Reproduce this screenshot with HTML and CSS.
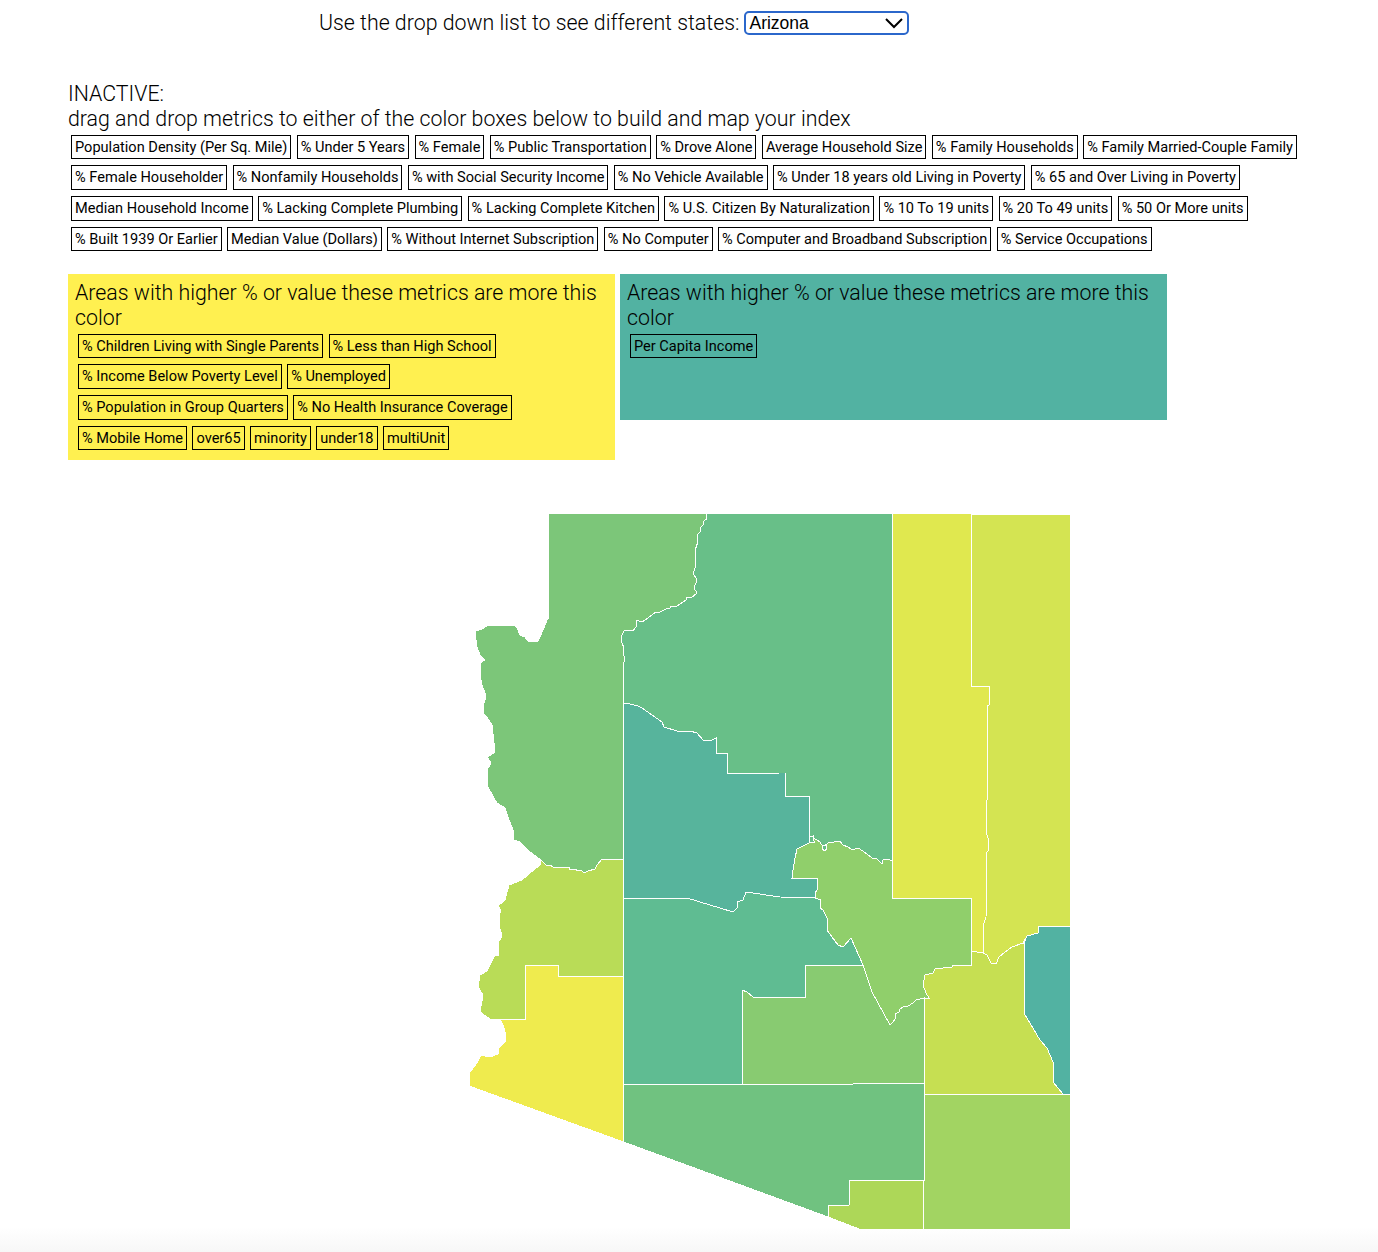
FILE: index.html
```html
<!DOCTYPE html>
<html>
<head>
    <meta charset="UTF-8">
    <title>Index Map</title>
    <link rel="stylesheet" href="styles.css">
</head>
<body>
    <div class="picker">
        <label for="state">Use the drop down list to see different states:</label>
        <div class="select-wrap">
            <select id="state" name="state">
                <option>Arizona</option>
                <option>Alabama</option>
                <option>Alaska</option>
            </select>
            <svg class="chevron" width="20" height="12" viewBox="0 0 20 12"><path d="M2 2 L10 10 L18 2" fill="none" stroke="#000" stroke-width="2"/></svg>
        </div>
    </div>

    <div class="inactive">
        <div class="title">INACTIVE:<br>drag and drop metrics to either of the color boxes below to build and map your index</div>
        <div class="tags">
            <span class="tag" draggable="true">Population Density (Per Sq. Mile)</span>
            <span class="tag" draggable="true">% Under 5 Years</span>
            <span class="tag" draggable="true">% Female</span>
            <span class="tag" draggable="true">% Public Transportation</span>
            <span class="tag" draggable="true">% Drove Alone</span>
            <span class="tag" draggable="true">Average Household Size</span>
            <span class="tag" draggable="true">% Family Households</span>
            <span class="tag" draggable="true">% Family Married-Couple Family</span>
            <span class="tag" draggable="true">% Female Householder</span>
            <span class="tag" draggable="true">% Nonfamily Households</span>
            <span class="tag" draggable="true">% with Social Security Income</span>
            <span class="tag" draggable="true">% No Vehicle Available</span>
            <span class="tag" draggable="true">% Under 18 years old Living in Poverty</span>
            <span class="tag" draggable="true">% 65 and Over Living in Poverty</span>
            <span class="tag" draggable="true">Median Household Income</span>
            <span class="tag" draggable="true">% Lacking Complete Plumbing</span>
            <span class="tag" draggable="true">% Lacking Complete Kitchen</span>
            <span class="tag" draggable="true">% U.S. Citizen By Naturalization</span>
            <span class="tag" draggable="true">% 10 To 19 units</span>
            <span class="tag" draggable="true">% 20 To 49 units</span>
            <span class="tag" draggable="true">% 50 Or More units</span>
            <span class="tag" draggable="true">% Built 1939 Or Earlier</span>
            <span class="tag" draggable="true">Median Value (Dollars)</span>
            <span class="tag" draggable="true">% Without Internet Subscription</span>
            <span class="tag" draggable="true">% No Computer</span>
            <span class="tag" draggable="true">% Computer and Broadband Subscription</span>
            <span class="tag" draggable="true">% Service Occupations</span>
        </div>
    </div>

    <div class="boxes">
        <div class="box box-yellow">
            <div class="title">Areas with higher % or value these metrics are more this color</div>
            <div class="tags">
                <span class="tag" draggable="true">% Children Living with Single Parents</span>
                <span class="tag" draggable="true">% Less than High School</span>
                <span class="tag" draggable="true">% Income Below Poverty Level</span>
                <span class="tag" draggable="true">% Unemployed</span>
                <span class="tag" draggable="true">% Population in Group Quarters</span>
                <span class="tag" draggable="true">% No Health Insurance Coverage</span>
                <span class="tag" draggable="true">% Mobile Home</span>
                <span class="tag" draggable="true">over65</span>
                <span class="tag" draggable="true">minority</span>
                <span class="tag" draggable="true">under18</span>
                <span class="tag" draggable="true">multiUnit</span>
            </div>
        </div>
        <div class="box box-teal">
            <div class="title">Areas with higher % or value these metrics are more this color</div>
            <div class="tags">
                <span class="tag" draggable="true">Per Capita Income</span>
            </div>
        </div>
    </div>

    <svg class="map" width="620" height="725" viewBox="460 505 620 725">
        <polygon class="county" fill="#7cc679" points="548.5,513.5 706,513.5 706.5,519 704,521 703,525 701,527 700,532 698,534 697.5,543 695.5,549 695.5,556 696,566 693,573 697,580 694,588 697,593 691,598 687,597.5 686,600 683,602 677,606 671,606 670,608 666,609 660,612 655,612.5 648,618 642,622 638,620.5 636,621 636,627 633,631 627,630 624,631 621,637 622,643 624,648 623.5,655 625,658 623.5,664 623.5,859 620,860 602,859 597,865 595,869 588,871 584,873 581,870 578,871 575,869 570,870 569,867 553,867 550,865 547,866 541,860 537,857 530,852 523,845 520,842 514,840 513,830 508,817 505,808 497,803 495,800 488,787 487,770 491,763 487,757 494,753 494,743 492,725 489,720 484,714 483,707 485,700 485,693 482,685 481,680 480,663 485,660 480,655 477,647 476,640 475,631 482,629 487,626 500,625 507,626 515,625 518,630 520,635 525,637 528,641 535,641 538,641 540,637 543,630 547,620 549,618"/>
        <polygon class="county" fill="#68bf88" points="706,513.5 892.5,513.5 892.5,865 892,861 888,859 883,860 882,864 877,859 872,858 863,851 858,848 852,850 848,847 843,845 840,841 828,843 823,847 820,842 812,837 809,843 809,796 785,796 785,773 780,773 727,774 727,753 716,753 716,738 710,741 703,740 697,733 690,731 677,731 664,727 662,722 642,708 638,706 630,704 623.5,703 623.5,664 625,658 623.5,655 624,648 622,643 621,637 624,631 627,630 633,631 636,627 636,621 638,620.5 642,622 648,618 655,612.5 660,612 666,609 670,608 671,606 677,606 683,602 686,600 687,597.5 691,598 697,593 694,588 697,580 693,573 696,566 695.5,556 695.5,549 697.5,543 698,534 700,532 701,527 703,525 704,521 706.5,519"/>
        <polygon class="county" fill="#57b49c" points="623.5,703 630,704 638,706 642,708 662,722 664,727 677,731 690,731 697,733 703,740 710,741 716,738 716,753 727,753 727,774 780,773 785,773 785,796 809,796 809,843 797,849 795,858 793,870 792,878 817,878 818,889 815,893 815,898 780,897 746,892 743,900 737,902 737,908 733,912 687,898 623.5,898"/>
        <polygon class="county" fill="#e0e84f" points="892.5,513.5 971,514 971,686 989.5,686 989,705 987,706 987,800 986,815 986,832 988,838 988,851 987,852 986,917 983,926 983,953 971,951 971,898 892.5,898"/>
        <polygon class="county" fill="#d4e452" points="971,514 1070,514 1070,926 1039,926 1038,933 1027,936 1023,943 1012,947 1005,952 999,957 996,964 991,963 987,955 983,953 983,926 986,917 987,852 988,851 988,838 986,832 986,815 987,800 987,706 989,705 989.5,686 971,686"/>
        <polygon class="county" fill="#90cf6b" points="797,849 809,843 812,837 820,842 823,847 828,843 840,841 843,845 848,847 852,850 858,848 863,851 872,858 877,859 882,864 883,860 888,859 892,861 892.5,865 892.5,898 971,898 971,965 953,965 952,967 935,969 933,973 925,975 923,985 926,993 929,998 924,998 916,1000 913,1003 908,1006 905,1006 900,1009 899,1012 895,1014 895,1019 893,1022 890,1025 872,992 863,965 851,938 843,947 838,945 832,937 827,930 827,918 823,910 820,908 821,900 815,898 815,893 818,889 817,878 792,878 793,870 795,858"/>
        <polygon class="lake" points="810,837 813,836 813,840 815,842 812,843 809,842"/>
        <polygon class="lake" points="822,845 826,845 827,849 824,851 822,848"/>
        <polygon class="county" fill="#52b2a2" points="1039,926 1070,926 1070,1094 1063,1094 1053,1082 1053,1062 1047,1048 1040,1040 1024,1013 1024,943 1027,936 1038,933"/>
        <polygon class="county" fill="#c6df52" points="971,951 983,953 987,955 991,963 996,964 999,957 1005,952 1012,947 1023,943 1024,943 1024,1013 1040,1040 1047,1048 1053,1062 1053,1082 1063,1094 924,1094 924,998 929,998 926,993 923,985 925,975 933,973 935,969 952,967 953,965 971,965"/>
        <polygon class="county" fill="#a2d462" points="923.5,1094 1070,1094 1070,1229 923.5,1229"/>
        <polygon class="county" fill="#add758" points="849.5,1180 923.5,1180 923.5,1229 859,1229 828,1217 828,1205.5 849.5,1205"/>
        <polygon class="county" fill="#70c280" points="623.5,1084 741.5,1084 850,1085 854,1083.5 924,1083.5 924,1180 849.5,1180 849.5,1205 828,1205.5 828,1217 623.5,1142"/>
        <polygon class="county" fill="#88cb71" points="742,984 742,990 747,992 753,997 805,997 805,965 863,965 872,992 890,1025 893,1022 895,1019 895,1014 899,1012 900,1009 905,1006 908,1006 913,1003 916,1000 924,998 924,1083.5 854,1083.5 850,1085 741.5,1084"/>
        <polygon class="county" fill="#5fbc92" points="623.5,898 687,898 733,912 737,908 737,902 743,900 746,892 780,897 815,898 821,900 820,908 823,910 827,918 827,930 832,937 838,945 843,947 851,938 863,965 805,965 805,997 753,997 747,992 742,990 742,1084 623.5,1084"/>
        <polygon class="county" fill="#b9dc57" points="541,860 547,866 550,865 553,867 569,867 570,870 575,869 578,871 581,870 584,873 588,871 595,869 597,865 602,859 620,860 623.5,859 623.5,976 558,976 558,965 525,965 525,1019 500,1019 490,1019 480,1012 483,995 478,987 480,975 487,971 495,955 498,955 498,943 502,936 499,925 499,915 501,910 498,906 505,900 509,885 522,880 530,873 540,865"/>
        <polygon class="county" fill="#efeb4e" points="525,965 558,965 558,976 623.5,976 623.5,1142 469,1086 470,1072 477,1063 481,1055 490,1057 498,1054 499,1048 505,1042 505,1032 503,1025 500,1019 525,1019"/>
    </svg>
</body>
</html>
```

FILE: styles.css
```css
html {
    min-height: 1252px;
}
body {
    margin: 0;
    background: linear-gradient(to bottom, #fff 1227px, #f7f7f7 1252px) no-repeat;
    color: #000;
    font-family: Roboto, "Liberation Sans", sans-serif;
}
.picker {
    display: flex;
    align-items: center;
    gap: 5px;
    margin-left: 319px;
    padding-top: 11px;
    font-size: 21.33px;
    font-weight: 300;
    height: 24px;
}
.picker label {
    margin-bottom: 2px;
}
.select-wrap {
    position: relative;
    width: 165px;
    height: 24px;
}
.select-wrap select {
    display: block;
    appearance: none;
    width: 100%;
    height: 100%;
    box-sizing: border-box;
    margin: 0;
    padding: 0 0 0 3px;
    border: 2px solid #2b67cb;
    border-radius: 5px;
    background-color: #fff;
    color: #000;
    font-family: "Liberation Sans", sans-serif;
    font-size: 17.5px;
}
.chevron {
    position: absolute;
    top: 6px;
    right: 5px;
    pointer-events: none;
}
.title {
    font-size: 21.33px;
    font-weight: 300;
    line-height: 25px;
}
.inactive {
    margin: 46px 70px 0 68px;
}
.tags {
    display: flex;
    flex-wrap: wrap;
    gap: 6px 5.4px;
    padding: 3.7px 3px 0;
}
.tag {
    box-sizing: border-box;
    height: 24.7px;
    line-height: 23px;
    padding: 0 3px;
    border: 1px solid #000;
    font-size: 14.57px;
    white-space: nowrap;
}
.boxes {
    display: flex;
    align-items: flex-start;
    gap: 5px;
    margin: 22.6px 0 0 68px;
}
.box {
    box-sizing: border-box;
    width: 547px;
    padding: 6px 12px 9.3px 7px;
}
.box-yellow {
    background-color: #fff050;
}
.box-teal {
    background-color: #52b2a2;
    height: 146px;
}
.map {
    display: block;
    margin: 45px 0 0 460px;
}
.county {
    stroke: #fff;
    stroke-width: 1;
    shape-rendering: crispEdges;
}
.lake {
    fill: #68bf88;
    stroke: #fff;
    stroke-width: 1;
    shape-rendering: crispEdges;
}
```
